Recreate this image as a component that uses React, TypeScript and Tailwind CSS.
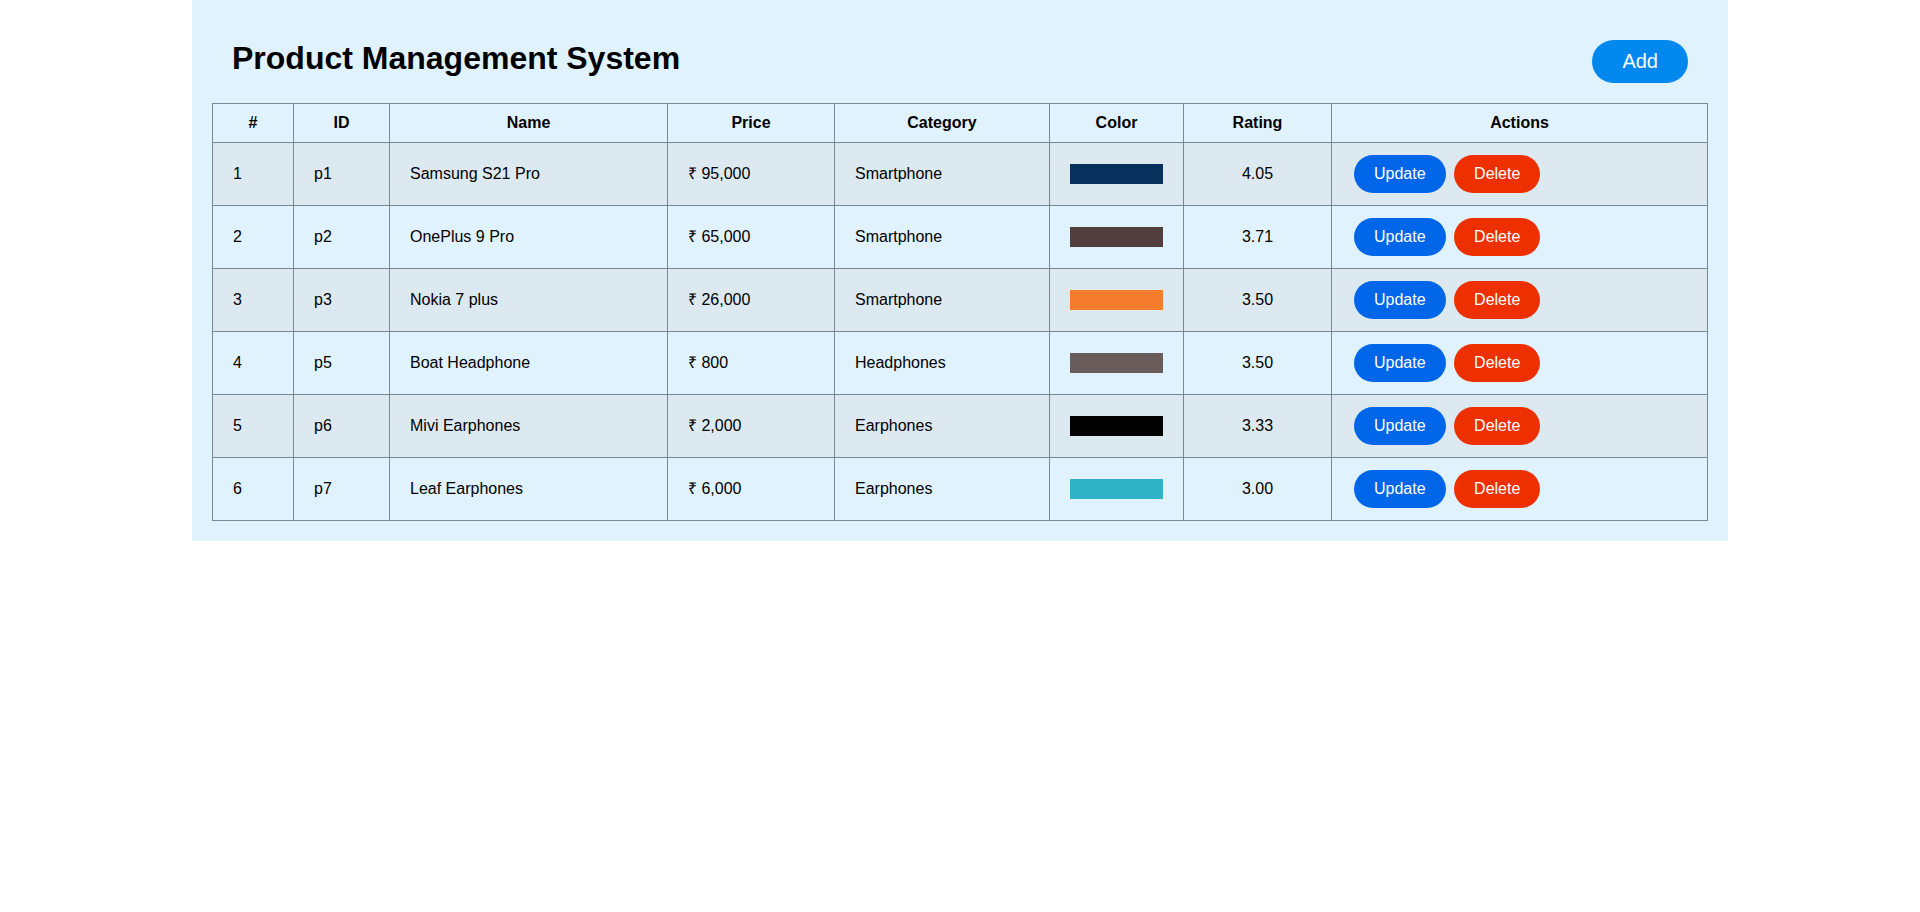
import React from "react";

type Product = {
  id: string;
  name: string;
  price: string;
  category: string;
  swatch: string;
  rating: string;
};

const products: Product[] = [
  { id: "p1", name: "Samsung S21 Pro", price: "₹ 95,000", category: "Smartphone", swatch: "bg-[#07305c]", rating: "4.05" },
  { id: "p2", name: "OnePlus 9 Pro", price: "₹ 65,000", category: "Smartphone", swatch: "bg-[#523e3d]", rating: "3.71" },
  { id: "p3", name: "Nokia 7 plus", price: "₹ 26,000", category: "Smartphone", swatch: "bg-[#f57c2d]", rating: "3.50" },
  { id: "p5", name: "Boat Headphone", price: "₹ 800", category: "Headphones", swatch: "bg-[#6b5c5c]", rating: "3.50" },
  { id: "p6", name: "Mivi Earphones", price: "₹ 2,000", category: "Earphones", swatch: "bg-[#000000]", rating: "3.33" },
  { id: "p7", name: "Leaf Earphones", price: "₹ 6,000", category: "Earphones", swatch: "bg-[#2eb2c5]", rating: "3.00" },
];

const headers = ["#", "ID", "Name", "Price", "Category", "Color", "Rating", "Actions"];

const gridCols = "grid grid-cols-[81px_96px_278px_167px_215px_134px_148px_377px]";

export default function App() {
  return (
    <div className="min-h-screen bg-white font-['Liberation_Sans',Arial,sans-serif] text-black">
      <div className="mx-auto w-[1536px] bg-[#e0f2fe] p-5">
        <div className="flex items-start justify-between p-5">
          <h1 className="text-[32px] font-bold leading-[36px]">Product Management System</h1>
          <button className="rounded-full bg-[#0088ee] px-[30px] py-[10px] text-[20px] leading-[23px] text-white">
            Add
          </button>
        </div>

        <div role="table" className="text-base leading-[18px]">
          <div role="row" className={gridCols}>
            {headers.map((h, i) => (
              <div
                key={h}
                role="columnheader"
                className={
                  "flex h-[39px] items-center justify-center border-l border-t border-[#778899] font-bold " +
                  (i === headers.length - 1 ? "border-r" : "")
                }
              >
                {h}
              </div>
            ))}
          </div>

          {products.map((p, idx) => {
            const last = idx === products.length - 1;
            const rowBg = idx % 2 === 0 ? "bg-[#dce9f1]" : "";
            const cell =
              "flex items-center border-l border-t border-[#778899] " +
              (last ? "h-[64px] border-b " : "h-[63px] ");
            return (
              <div role="row" key={p.id} className={gridCols + " " + rowBg}>
                <div role="cell" className={cell + "px-5"}>{idx + 1}</div>
                <div role="cell" className={cell + "px-5"}>{p.id}</div>
                <div role="cell" className={cell + "px-5"}>{p.name}</div>
                <div role="cell" className={cell + "px-5"}>{p.price}</div>
                <div role="cell" className={cell + "px-5"}>{p.category}</div>
                <div role="cell" className={cell + "px-5"}>
                  <div className={"h-5 w-full " + p.swatch} />
                </div>
                <div role="cell" className={cell + "justify-center px-5"}>{p.rating}</div>
                <div role="cell" className={cell + "gap-[8.5px] border-r pl-[22px]"}>
                  <button className="rounded-full bg-[#0066e9] px-5 py-[10px] text-base leading-[18px] text-white">
                    Update
                  </button>
                  <button className="rounded-full bg-[#ee3000] px-5 py-[10px] text-base leading-[18px] text-white">
                    Delete
                  </button>
                </div>
              </div>
            );
          })}
        </div>
      </div>
    </div>
  );
}
